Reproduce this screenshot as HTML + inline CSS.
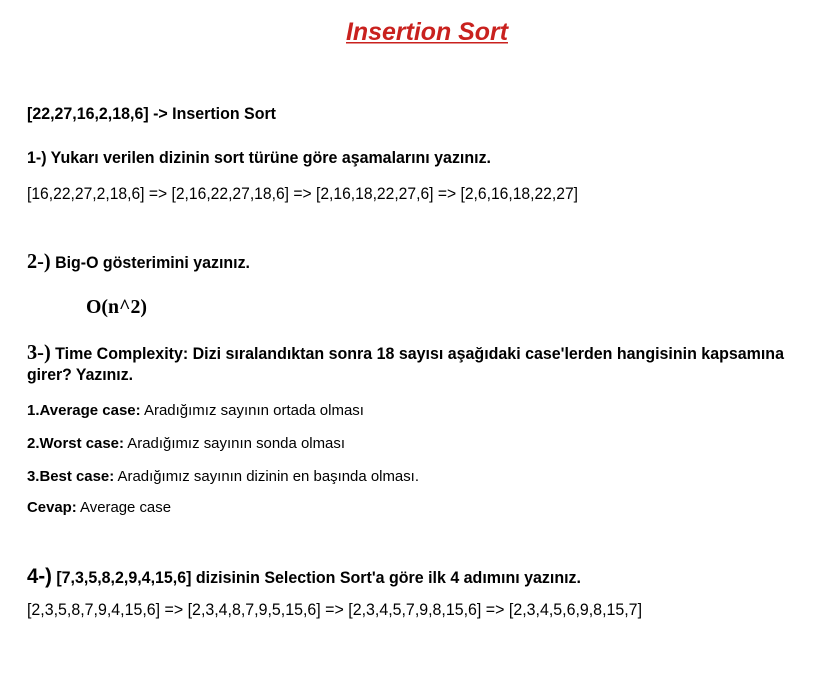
<!DOCTYPE html>
<html><head><meta charset="utf-8"><style>
html,body{margin:0;padding:0;background:#fff;width:817px;height:693px;overflow:hidden}
svg{display:block}
text{font-family:"Liberation Sans",sans-serif;fill:#000}
.s{font-family:"Liberation Serif",serif}
.b{font-weight:bold}
</style></head><body>
<svg width="817" height="693" viewBox="0 0 817 693" xmlns="http://www.w3.org/2000/svg">
<text x="346" y="40" font-size="25" font-weight="bold" font-style="italic" style="fill:#c9211e" textLength="162" lengthAdjust="spacingAndGlyphs">Insertion Sort</text>
<rect x="346" y="42" width="162" height="1.5" fill="#c9211e"/>
<text x="27" y="119" font-size="16.5" class="b" textLength="249" lengthAdjust="spacingAndGlyphs">[22,27,16,2,18,6] -&gt; Insertion Sort</text>
<text x="27" y="163" font-size="16.5" class="b" textLength="464" lengthAdjust="spacingAndGlyphs">1-) Yukarı verilen dizinin sort türüne göre aşamalarını yazınız.</text>
<text x="27" y="199" font-size="17" textLength="551" lengthAdjust="spacingAndGlyphs">[16,22,27,2,18,6] =&gt; [2,16,22,27,18,6] =&gt; [2,16,18,22,27,6] =&gt; [2,6,16,18,22,27]</text>
<text x="27" y="268" font-size="16.5" class="b" textLength="223" lengthAdjust="spacingAndGlyphs"><tspan class="s" font-size="21">2-)</tspan> Big-O gösterimini yazınız.</text>
<text x="86" y="313" font-size="20" class="s b" textLength="61" lengthAdjust="spacingAndGlyphs">O(n^2)</text>
<text x="27" y="359" font-size="16.5" class="b" textLength="757" lengthAdjust="spacingAndGlyphs"><tspan class="s" font-size="21">3-)</tspan> Time Complexity: Dizi sıralandıktan sonra 18 sayısı aşağıdaki case'lerden hangisinin kapsamına</text>
<text x="27" y="380" font-size="16.5" class="b" textLength="106" lengthAdjust="spacingAndGlyphs">girer? Yazınız.</text>
<text x="27" y="415" font-size="15" textLength="337" lengthAdjust="spacingAndGlyphs"><tspan class="b">1.Average case:</tspan> Aradığımız sayının ortada olması</text>
<text x="27" y="448" font-size="15" textLength="318" lengthAdjust="spacingAndGlyphs"><tspan class="b">2.Worst case:</tspan> Aradığımız sayının sonda olması</text>
<text x="27" y="481" font-size="15" textLength="392" lengthAdjust="spacingAndGlyphs"><tspan class="b">3.Best case:</tspan> Aradığımız sayının dizinin en başında olması.</text>
<text x="27" y="512" font-size="15" textLength="144" lengthAdjust="spacingAndGlyphs"><tspan class="b">Cevap:</tspan> Average case</text>
<text x="27" y="583" font-size="16.5" class="b" textLength="554" lengthAdjust="spacingAndGlyphs"><tspan font-size="21">4-)</tspan> [7,3,5,8,2,9,4,15,6] dizisinin Selection Sort'a göre ilk 4 adımını yazınız.</text>
<text x="27" y="615" font-size="17" textLength="615" lengthAdjust="spacingAndGlyphs">[2,3,5,8,7,9,4,15,6] =&gt; [2,3,4,8,7,9,5,15,6] =&gt; [2,3,4,5,7,9,8,15,6] =&gt; [2,3,4,5,6,9,8,15,7]</text>
</svg>
</body></html>
